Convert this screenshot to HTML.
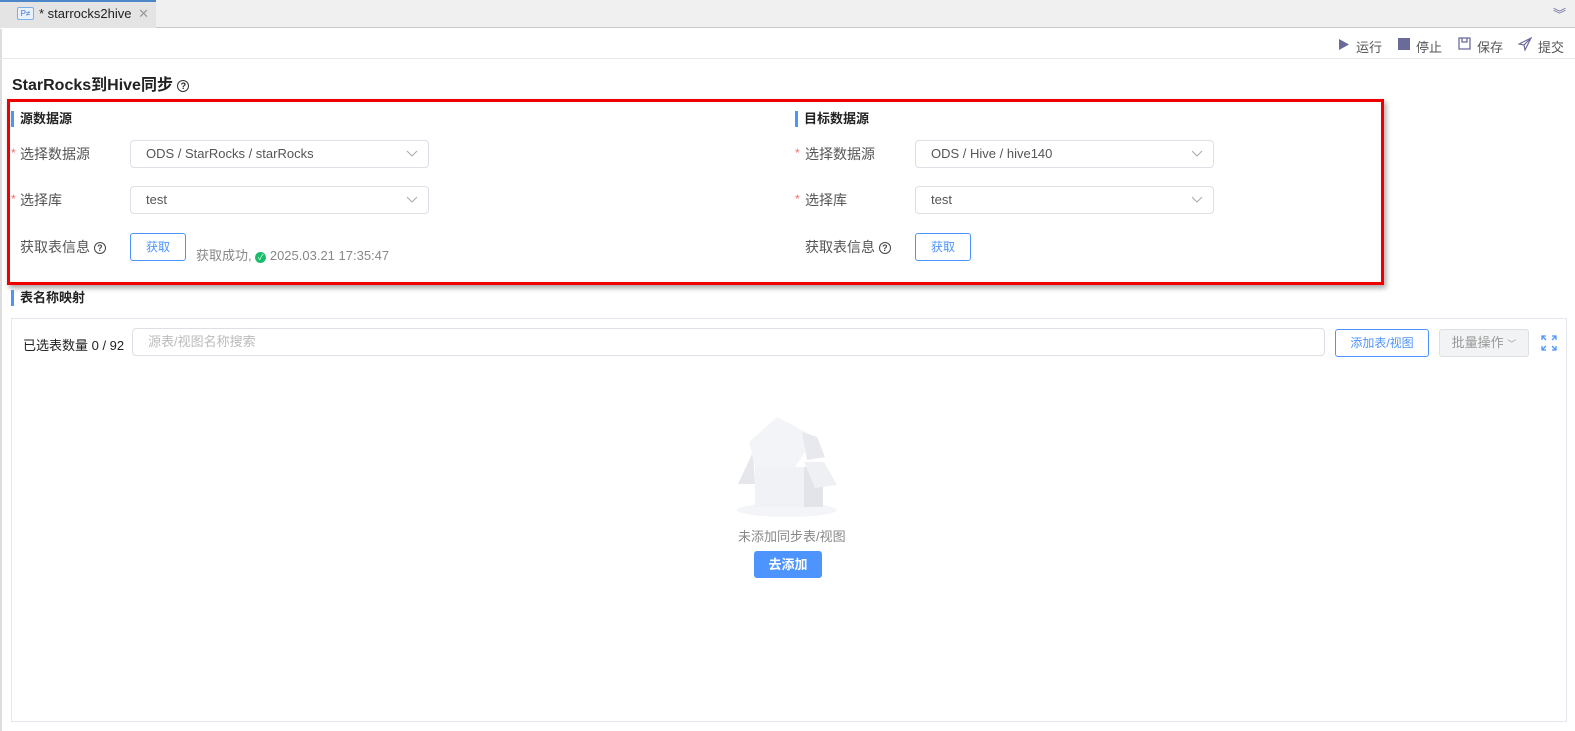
<!DOCTYPE html>
<html><head><meta charset="utf-8"><style>
*{box-sizing:border-box;margin:0;padding:0}
body{width:1575px;height:731px;overflow:hidden;background:#fff;font-family:"Liberation Sans","Noto Sans CJK SC",sans-serif;font-size:13px;color:#333;position:relative}
.abs{position:absolute}
.sel{position:absolute;height:28px;border:1px solid #dcdfe6;border-radius:4px;padding-left:15px;line-height:26px;color:#555;font-size:13px}
.sel svg{position:absolute;right:10px;top:9px}
.lbl{position:absolute;font-size:14px;color:#555}
.star{color:#f56c6c;font-size:12px;position:absolute}
.btn{position:absolute;border:1px solid #4d94ff;border-radius:3px;color:#4d94ff;text-align:center;font-size:12px;background:#fff}
.h{position:absolute;font-weight:bold;font-size:13px;color:#222;padding-left:6px;border-left:3px solid #4d94ff;line-height:16px}
.q{display:inline-block;width:12px;height:12px;border:1.3px solid #333;border-radius:50%;font-size:9px;line-height:10px;text-align:center;font-weight:bold;vertical-align:middle}
.tb{position:absolute;top:37px;font-size:13px;color:#555}
</style></head><body>
<div class="abs" style="left:0;top:0;width:1575px;height:28px;background:#f0f0f0;border-bottom:1px solid #c8c8c8"></div>
<div class="abs" style="left:0;top:0;width:156px;height:28px;background:#e4e4e4;border-top:2px solid #4a86c8"></div>
<div class="abs" style="left:17px;top:7px;width:17px;height:13px;border:1px solid #7ab0e8;background:#e8f1fc;border-radius:2px;font-size:8px;color:#3a7bd5;line-height:11px;text-align:center">P≠</div>
<div class="abs" style="left:39px;top:6px;font-size:13px;color:#222">* starrocks2hive <span style="color:#999;margin-left:3px">✕</span></div>
<div class="abs" style="left:1553px;top:4px;color:#6a6aa0;font-size:13px">︾</div>
<div class="abs" style="left:0;top:29px;width:2px;height:702px;background:#ddd"></div>
<div class="abs" style="left:0;top:58px;width:1575px;height:1px;background:#e8e8e8"></div>
<svg class="abs" style="left:1338px;top:38px" width="12" height="13"><path d="M1 1L11 6.5 1 12z" fill="#6b6b9a"/></svg><div class="tb" style="left:1356px">运行</div>
<div class="abs" style="left:1398px;top:38px;width:12px;height:12px;background:#6b6b9a"></div><div class="tb" style="left:1416px">停止</div>
<svg class="abs" style="left:1458px;top:37px" width="13" height="13"><path d="M1 1h11v11H1zM4 1v4h5V1" stroke="#6b6b9a" fill="none" stroke-width="1.3"/></svg><div class="tb" style="left:1477px">保存</div>
<svg class="abs" style="left:1518px;top:37px" width="14" height="14"><path d="M13 1L1 7l5 1 1 5z M6 8l7-7" stroke="#6b6b9a" fill="none" stroke-width="1.2"/></svg><div class="tb" style="left:1538px">提交</div>
<div class="abs" style="left:12px;top:71px;font-size:16px;font-weight:bold;color:#222">StarRocks到Hive同步 <span class="q">?</span></div>
<div class="abs" style="left:7px;top:99px;width:1377px;height:186px;border:3px solid #e00;box-shadow:2px 3px 5px rgba(0,0,0,.35)"></div>
<div class="h" style="left:11px;top:111px">源数据源</div>
<div class="h" style="left:795px;top:111px">目标数据源</div>
<span class="star" style="left:11px;top:146px">*</span><div class="lbl" style="left:20px;top:144px">选择数据源</div>
<div class="sel" style="left:130px;top:140px;width:299px">ODS / StarRocks / starRocks<svg width="12" height="8"><path d="M1 1l5 5 5-5" stroke="#aaa" fill="none"/></svg></div>
<span class="star" style="left:11px;top:192px">*</span><div class="lbl" style="left:20px;top:190px">选择库</div>
<div class="sel" style="left:130px;top:186px;width:299px">test<svg width="12" height="8"><path d="M1 1l5 5 5-5" stroke="#aaa" fill="none"/></svg></div>
<div class="lbl" style="left:20px;top:237px">获取表信息 <span class="q" style="border-color:#444;color:#444">?</span></div>
<div class="btn" style="left:130px;top:233px;width:56px;height:28px;line-height:26px">获取</div>
<div class="abs" style="left:196px;top:245px;color:#888;font-size:13px">获取成功, <span style="display:inline-block;width:11px;height:11px;border-radius:50%;background:#19be6b;color:#fff;font-size:8px;line-height:11px;text-align:center;vertical-align:0">✓</span> 2025.03.21 17:35:47</div>
<span class="star" style="left:795px;top:146px">*</span><div class="lbl" style="left:805px;top:144px">选择数据源</div>
<div class="sel" style="left:915px;top:140px;width:299px">ODS / Hive / hive140<svg width="12" height="8"><path d="M1 1l5 5 5-5" stroke="#aaa" fill="none"/></svg></div>
<span class="star" style="left:795px;top:192px">*</span><div class="lbl" style="left:805px;top:190px">选择库</div>
<div class="sel" style="left:915px;top:186px;width:299px">test<svg width="12" height="8"><path d="M1 1l5 5 5-5" stroke="#aaa" fill="none"/></svg></div>
<div class="lbl" style="left:805px;top:237px">获取表信息 <span class="q" style="border-color:#444;color:#444">?</span></div>
<div class="btn" style="left:915px;top:233px;width:56px;height:28px;line-height:26px">获取</div>
<div class="h" style="left:11px;top:290px">表名称映射</div>
<div class="abs" style="left:11px;top:318px;width:1556px;height:404px;border:1px solid #e4e7ed"></div>
<div class="abs" style="left:23px;top:335px;font-size:13px;color:#222">已选表数量 0 / 92</div>
<div class="sel" style="left:132px;top:328px;width:1193px;color:#bbb">源表/视图名称搜索</div>
<div class="btn" style="left:1335px;top:329px;width:94px;height:28px;line-height:26px">添加表/视图</div>
<div class="abs" style="left:1439px;top:329px;width:90px;height:28px;line-height:26px;border:1px solid #dcdfe6;border-radius:3px;background:#f2f3f5;color:#999;text-align:center;font-size:13px">批量操作 <span style="font-size:9px">﹀</span></div>
<svg class="abs" style="left:1541px;top:335px" width="16" height="16"><path d="M1 5V1h4M11 1h4v4M15 11v4h-4M5 15H1v-4M1 1l4 4M15 1l-4 4M15 15l-4-4M1 15l4-4" stroke="#4d94ff" fill="none" stroke-width="1.3"/></svg>
<svg class="abs" style="left:737px;top:412px" width="100" height="106">
<ellipse cx="50" cy="98" rx="50" ry="7" fill="#f4f5f8"/>
<polygon points="16,40 1,72 18,72" fill="#e6e7ec"/>
<polygon points="18,55 67,55 67,95 18,95" fill="#f1f2f5"/>
<polygon points="67,55 86,55 86,95 67,95" fill="#e2e4ea"/>
<polygon points="67,50 87,50 100,73 78,76" fill="#eef0f3"/>
<polygon points="12,30 40,5 78,25 58,55 18,55" fill="#f3f4f7"/>
<polygon points="65,20 80,25 88,45 70,48" fill="#e8e9ee"/>
</svg>
<div class="abs" style="left:738px;top:526px;color:#888;font-size:13px">未添加同步表/视图</div>
<div class="abs" style="left:754px;top:551px;width:68px;height:27px;line-height:27px;background:#4d94ff;color:#fff;border-radius:3px;text-align:center;font-weight:bold;font-size:13px">去添加</div>
</body></html>
